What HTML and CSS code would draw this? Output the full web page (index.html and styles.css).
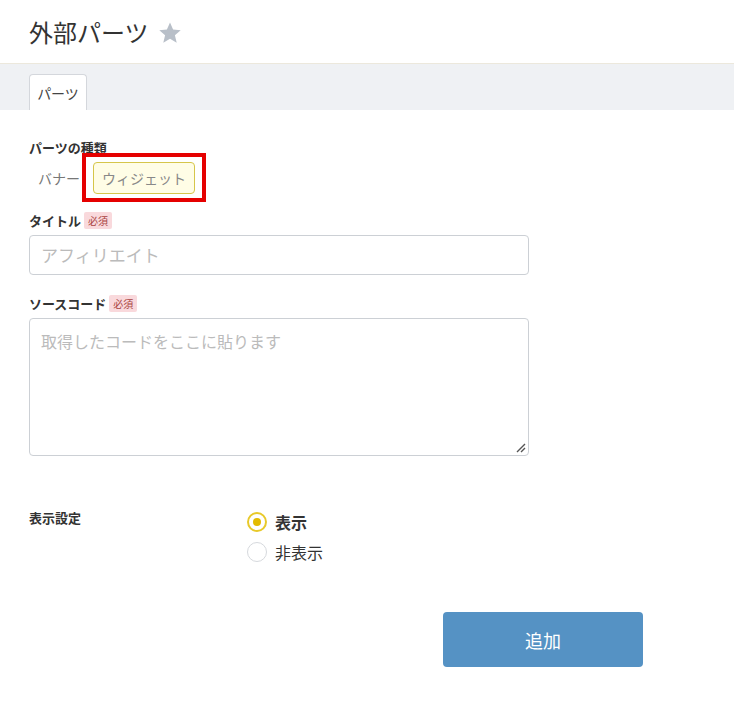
FILE: index.html
```html
<!DOCTYPE html>
<html lang="ja">
<head>
<meta charset="utf-8">
<link rel="stylesheet" href="styles.css">
</head>
<body>
<header class="page-header">
  <h1 class="title">外部パーツ</h1>
  <svg class="star" viewBox="0 0 24 24" width="24" height="24"><path d="M12 1.5l3.1 7.1 7.6.6-5.8 5 1.8 7.5L12 17.8l-6.7 3.9 1.8-7.5-5.8-5 7.6-.6z" fill="#b8bfc8"/></svg>
</header>
<nav class="tabbar">
  <div class="tab">パーツ</div>
</nav>
<main class="content">
  <div class="field field-type">
    <div class="label">パーツの種類</div>
    <div class="type-row">
      <span class="type-opt">バナー</span>
      <span class="highlight"><span class="type-btn">ウィジェット</span></span>
    </div>
  </div>
  <div class="field field-title">
    <div class="label">タイトル<span class="req">必須</span></div>
    <div class="input">アフィリエイト</div>
  </div>
  <div class="field">
    <div class="label">ソースコード<span class="req">必須</span></div>
    <div class="textarea">取得したコードをここに貼ります
      <svg class="grip" viewBox="0 0 12 12" width="12" height="12"><path d="M11 3L3 11M11 7L7 11" stroke="#555" stroke-width="1.4"/></svg>
    </div>
  </div>
  <div class="display-row">
    <div class="label dlabel">表示設定</div>
    <div class="radios">
      <div class="radio on"><span class="circle"><span class="dot"></span></span><span class="rtext bold">表示</span></div>
      <div class="radio"><span class="circle"></span><span class="rtext">非表示</span></div>
    </div>
  </div>
  <div class="actions">
    <button class="submit">追加</button>
  </div>
</main>
</body>
</html>
```
FILE: styles.css
```css
* { box-sizing: border-box; }
body {
  margin: 0;
  font-family: "Noto Sans CJK JP", "Noto Sans", sans-serif;
  color: #333;
  background: #fff;
}
.page-header {
  height: 64px;
  display: flex;
  align-items: center;
  padding: 0 29px;
  border-bottom: 1px solid #ece8dc;
}
.title {
  margin: 0;
  font-size: 24px;
  font-weight: 400;
  color: #333;
}
.star { margin-left: 9px; margin-top: 2px; }
.tabbar {
  background: #eff1f4;
  height: 46px;
  padding: 10px 29px 0;
  display: flex;
  align-items: flex-end;
}
.tab {
  width: 58px;
  height: 36px;
  background: #fff;
  border: 1px solid #d4d7dc;
  border-bottom: none;
  border-radius: 4px 4px 0 0;
  font-size: 14px;
  color: #444;
  display: flex;
  align-items: center;
  justify-content: center;
}
.content {
  padding: 28px 0 0 29px;
  width: 529px;
}
.field { margin-bottom: 15px; }
.field-type { margin-bottom: 9px; }
.field-title { margin-bottom: 19px; }
.label {
  font-size: 13px;
  font-weight: 700;
  color: #333;
  display: flex;
  align-items: center;
  height: 18px;
}
.req {
  background: #f9d9dc;
  color: #a94442;
  font-size: 10px;
  font-weight: 400;
  padding: 0 4px;
  height: 17px;
  line-height: 17px;
  border-radius: 2px;
  margin-left: 3px;
}
.type-row {
  display: flex;
  align-items: center;
  margin-top: -3px;
  margin-left: 9px;
}
.type-opt {
  font-size: 14px;
  color: #777;
  margin-right: 2px;
}
.highlight {
  border: 4px solid #e50000;
  padding: 5px 7px 4px;
  display: inline-flex;
}
.type-btn {
  display: inline-block;
  background: #fffde6;
  border: 1px solid #d6c64a;
  border-radius: 4px;
  font-size: 14px;
  color: #888;
  padding: 0 8px;
  height: 32px;
  line-height: 30px;
}
.input {
  margin-top: 6px;
  height: 40px;
  border: 1px solid #ccd0d5;
  border-radius: 4px;
  font-size: 17px;
  color: #bbb;
  padding: 0 11px;
  line-height: 38px;
}
.textarea {
  position: relative;
  margin-top: 6px;
  height: 138px;
  border: 1px solid #ccd0d5;
  border-radius: 4px;
  font-size: 16px;
  color: #bbb;
  padding: 10px 11px;
}
.grip { position: absolute; right: 2px; bottom: 2px; }
.display-row {
  display: flex;
  margin-top: 52px;
}
.dlabel { width: 218px; align-items: flex-start; }
.radios { display: flex; flex-direction: column; gap: 10px; margin-top: 4px; }
.radio { display: flex; align-items: center; height: 20px; }
.circle {
  width: 20px;
  height: 20px;
  border-radius: 50%;
  border: 1px solid #d6d9dd;
  display: flex;
  align-items: center;
  justify-content: center;
  margin-right: 8px;
}
.radio.on .circle { border: 2px solid #e8c92a; }
.dot { width: 8px; height: 8px; border-radius: 50%; background: #e3bb00; }
.rtext { font-size: 16px; color: #333; }
.rtext.bold { font-weight: 700; }
.actions {
  display: flex;
  justify-content: flex-end;
  margin-top: 50px;
  width: 614px;
}
.submit {
  width: 200px;
  height: 55px;
  background: #5592c4;
  color: #fff;
  border: none;
  border-radius: 4px;
  font-family: inherit;
  font-size: 18px;
}
```
